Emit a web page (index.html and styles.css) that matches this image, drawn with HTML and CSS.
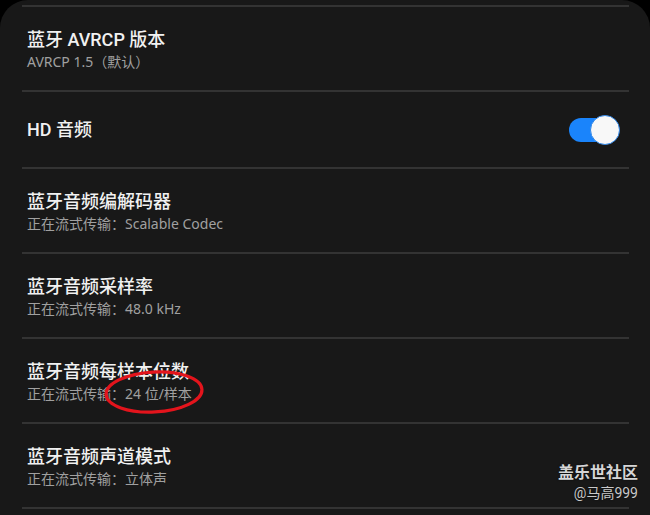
FILE: index.html
```html
<!DOCTYPE html>
<html>

<head>
  <meta charset="utf-8">
  <title>蓝牙音频设置</title>
  <link rel="stylesheet" href="styles.css">
</head>

<body>
  <div class="screen">
    <ul class="setting-list">
      <li class="setting-item">
        <div class="setting-title">蓝牙 AVRCP 版本</div>
        <div class="setting-sub">AVRCP 1.5（默认）</div>
      </li>
      <li class="setting-item single">
        <div class="setting-title">HD 音频</div>
        <div class="switch on"><span class="thumb"></span></div>
      </li>
      <li class="setting-item">
        <div class="setting-title">蓝牙音频编解码器</div>
        <div class="setting-sub">正在流式传输：Scalable Codec</div>
      </li>
      <li class="setting-item">
        <div class="setting-title">蓝牙音频采样率</div>
        <div class="setting-sub">正在流式传输：48.0 kHz</div>
      </li>
      <li class="setting-item">
        <div class="setting-title">蓝牙音频每样本位数</div>
        <div class="setting-sub">正在流式传输：24 位/样本</div>
      </li>
      <li class="setting-item">
        <div class="setting-title">蓝牙音频声道模式</div>
        <div class="setting-sub">正在流式传输：立体声</div>
      </li>
      <li class="setting-item"></li>
    </ul>

    <!-- 标注圈 -->
    <svg class="mark" width="104" height="48" viewBox="0 0 104 48">
      <ellipse cx="51" cy="23" rx="48" ry="20" transform="rotate(-3 51 23)" fill="none" stroke="#e3141c" stroke-width="3.2" />
    </svg>

    <div class="watermark">
      <div class="wm-title">盖乐世社区</div>
      <div class="wm-user">@马高999</div>
    </div>
  </div>
</body>

</html>
```

FILE: styles.css
```css
/* reset */
* {
  margin: 0;
  padding: 0;
  box-sizing: border-box;
}

ul,
li {
  list-style: none;
}

body {
  background: #000;
  font-family: Roboto, "Noto Sans CJK SC", sans-serif;
}

.screen {
  position: relative;
  width: 650px;
  height: 515px;
  overflow: hidden;
  background: #181818;
  border-radius: 28px 28px 0 0;
}

.setting-list {
  padding-top: 5px;
  margin: 0 21px 0 22px;
}

.setting-item {
  height: 85px;
  padding-left: 5px;
  padding-right: 9px;
  display: flex;
  flex-direction: column;
  justify-content: center;
  border-top: 2px solid #333;
}

.setting-item.single {
  height: 77px;
  flex-direction: row;
  align-items: center;
  justify-content: space-between;
}

.setting-title {
  font-size: 18px;
  line-height: 25px;
  font-weight: 500;
  color: #f1f1f1;
}

.setting-sub {
  font-family: "Noto Sans", "Noto Sans CJK SC", sans-serif;
  font-size: 14px;
  line-height: 19px;
  color: #a0a0a0;
}

.switch {
  position: relative;
  width: 51px;
  height: 30px;
}

.switch::before {
  content: "";
  position: absolute;
  left: 0;
  top: 3px;
  width: 44px;
  height: 24px;
  border-radius: 12px;
  background: #1a84fb;
}

.switch .thumb {
  position: absolute;
  right: 0;
  top: 0;
  width: 30px;
  height: 30px;
  border-radius: 50%;
  background: #f8f8f8;
  border: 1px solid #2f86e8;
}

.mark {
  position: absolute;
  left: 103px;
  top: 369px;
}

.watermark {
  position: absolute;
  right: 12px;
  top: 462px;
  text-align: right;
  text-shadow: 0 0 2px rgba(0, 0, 0, 0.6);
}

.wm-title {
  font-size: 16px;
  line-height: 22px;
  font-weight: 700;
  color: #d6d6d6;
}

.wm-user {
  font-size: 14px;
  line-height: 18px;
  color: #c9c9c9;
}
```
